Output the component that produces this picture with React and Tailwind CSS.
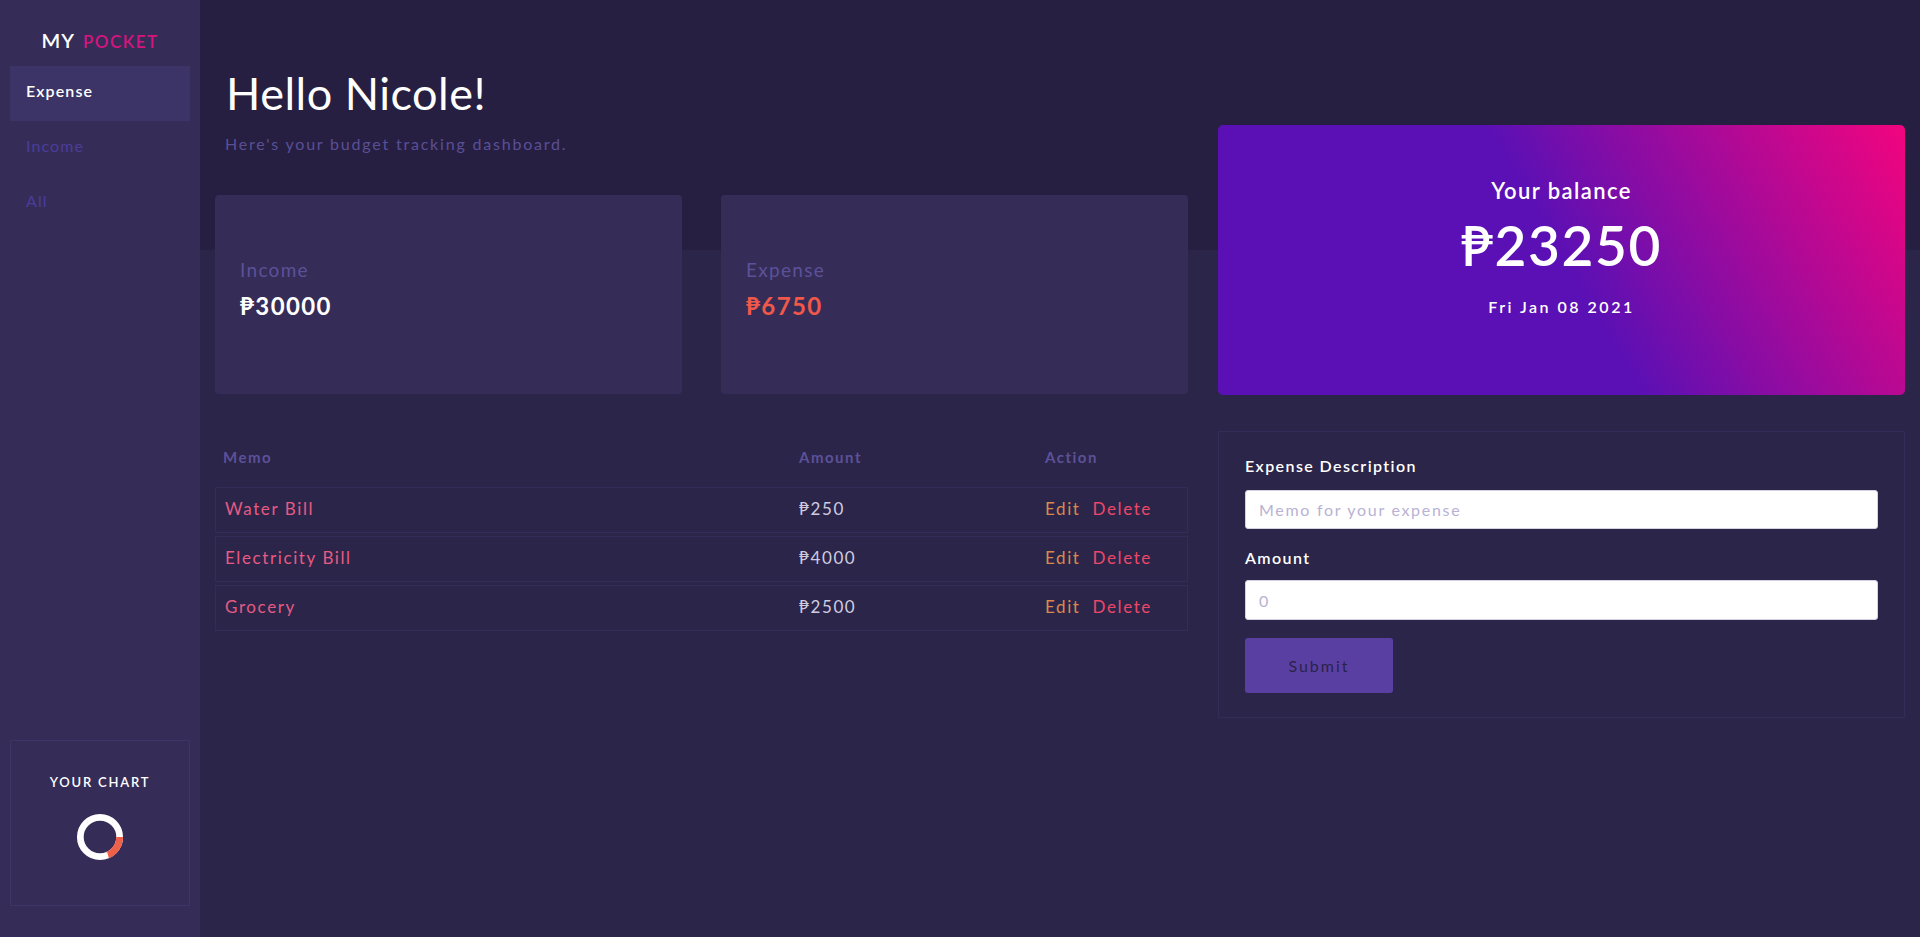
import React from 'react';

const expenses = [
  { id: 1, memo: 'Water Bill', amount: 250 },
  { id: 2, memo: 'Electricity Bill', amount: 4000 },
  { id: 3, memo: 'Grocery', amount: 2500 },
];

const Donut = () => (
  <svg width="48" height="48" viewBox="0 0 50 50">
    <circle cx="25" cy="25" r="20.5" fill="none" stroke="#ffffff" strokeWidth="7" />
    <path d="M45.5 25 A20.5 20.5 0 0 1 32.68 44" fill="none" stroke="#ef6049" strokeWidth="7" />
    <line x1="31.9" y1="41" x2="33.5" y2="47" stroke="#ffffff" strokeWidth="1.2" />
  </svg>
);

const Sidebar = () => {
  return (
    <aside className='w-[200px] shrink-0 h-full bg-[#352d58] flex flex-col'>
      <div className='pt-[26px] text-center leading-[28px]'>
        <span className='text-[20px] font-semibold text-white tracking-[1px]'>MY</span>
        <span className='ml-[8px] text-[17px] font-semibold text-[#d5147d] tracking-[1.5px]'>POCKET</span>
      </div>

      <nav className='mt-[10px] flex flex-col'>
        <div className='mx-[10px] h-[55px] pl-[16px] pb-[5px] flex items-center bg-[#3c3466] text-white text-[16px] font-semibold tracking-[1.1px]'>Expense</div>
        <div className='mx-[10px] h-[55px] pl-[16px] pb-[5px] flex items-center text-[#4b3c9c] text-[16px] tracking-[1.1px]'>Income</div>
        <div className='mx-[10px] h-[55px] pl-[16px] pb-[5px] flex items-center text-[#4b3c9c] text-[16px] tracking-[1.1px]'>All</div>
      </nav>

      <div className='mt-auto mx-[10px] mb-[31px] h-[166px] border border-[#3e3566] flex flex-col items-center'>
        <p className='mt-[33px] text-[13px] leading-[16px] font-semibold text-white tracking-[1.8px]'>YOUR CHART</p>
        <div className='mt-[23px]'>
          <Donut />
        </div>
      </div>
    </aside>
  );
};

const StatCard = ({ label, value, valueClass }) => (
  <div className='h-[199px] rounded-[4px] bg-[#352d57] pl-[25px] pt-[63px]'>
    <p className='text-[19px] leading-[24px] text-[#5c5199] tracking-[1.3px]'>{label}</p>
    <p className={'mt-[10px] text-[24px] leading-[28px] font-bold tracking-[1.4px] ' + valueClass}>₱{value}</p>
  </div>
);

const App = () => {
  return (
    <div className="flex h-[937px] w-full overflow-hidden font-['Lato','Noto_Sans',sans-serif]">
      <Sidebar />

      <main className='flex-1 bg-[linear-gradient(to_bottom,#261f42_250px,#2b2549_250px)] px-[15px]'>
        <div className='grid grid-cols-[973px_1fr] gap-x-[30px]'>

          {/* left column */}
          <div>
            <h1 className='pt-[71px] pl-[11px] text-[45px] leading-none text-white tracking-[0.5px]'>Hello Nicole!</h1>
            <p className='mt-[18px] pl-[10px] text-[16px] leading-[20px] text-[#5a4f96] tracking-[1.8px]'>Here's your budget tracking dashboard.</p>

            <div className='mt-[41px] grid grid-cols-2 gap-[39px]'>
              <StatCard label='Income' value='30000' valueClass='text-white' />
              <StatCard label='Expense' value='6750' valueClass='text-[#f0584a]' />
            </div>

            <div className='mt-[52px]'>
              <div className='grid grid-cols-[575px_246px_1fr] h-[20px] items-center text-[15px] font-bold text-[#5c5199] tracking-[1.5px]'>
                <div className='px-[8px]'>Memo</div>
                <div className='px-[9px]'>Amount</div>
                <div className='px-[9px]'>Action</div>
              </div>

              <div className='mt-[21px] flex flex-col gap-[3px]'>
                {expenses.map(item => {
                  return (
                    <div key={item.id} className='grid grid-cols-[575px_246px_1fr] h-[46px] pb-[2px] items-center border border-[#342c57] text-[17px] tracking-[1.6px]'>
                      <div className='px-[9px] text-[#e65a83]'>{item.memo}</div>
                      <div className='px-[8px] text-[#d0cce0]'>₱{item.amount}</div>
                      <div className='px-[8px] flex gap-[12px]'>
                        <span className='text-[#d98a4b]'>Edit</span>
                        <span className='text-[#ed4768]'>Delete</span>
                      </div>
                    </div>
                  )
                })}
              </div>
            </div>
          </div>

          {/* right column */}
          <div>
            <div className='mt-[125px] h-[270px] rounded-[5px] bg-[linear-gradient(60deg,#5a10b5_50%,#f2047e)] flex flex-col items-center text-white'>
              <p className='mt-[52px] text-[22px] leading-[28px] font-semibold tracking-[1.4px]'>Your balance</p>
              <p className='mt-[13px] text-[55px] leading-none font-semibold tracking-[1.6px]'>₱23250</p>
              <p className='mt-[24px] text-[16px] leading-[20px] font-semibold tracking-[2.5px]'>Fri Jan 08 2021</p>
            </div>

            <form className='mt-[36px] h-[287px] border border-[#342c57] px-[26px] pt-[22px]'>
              <label className='block text-[16px] leading-[24px] font-semibold text-white tracking-[1.4px]'>Expense Description</label>
              <input className='mt-[12px] block w-full h-[39px] rounded-[3px] bg-white border border-[#d4d2e2] px-[13px] text-[16px] tracking-[1.7px] placeholder:text-[#b8b2d4] outline-none' placeholder='Memo for your expense' />
              <label className='mt-[17px] block text-[16px] leading-[24px] font-semibold text-white tracking-[1.4px]'>Amount</label>
              <input className='mt-[10px] block w-full h-[40px] rounded-[3px] bg-white border border-[#d4d2e2] px-[13px] text-[16px] tracking-[1.7px] placeholder:text-[#b8b2d4] outline-none' placeholder='0' />
              <button type='button' className='mt-[18px] w-[148px] h-[55px] rounded-[3px] bg-[#5a3fa3] text-[16px] text-[#2a2348] tracking-[2px]'>Submit</button>
            </form>
          </div>

        </div>
      </main>
    </div>
  );
};

export default App;
